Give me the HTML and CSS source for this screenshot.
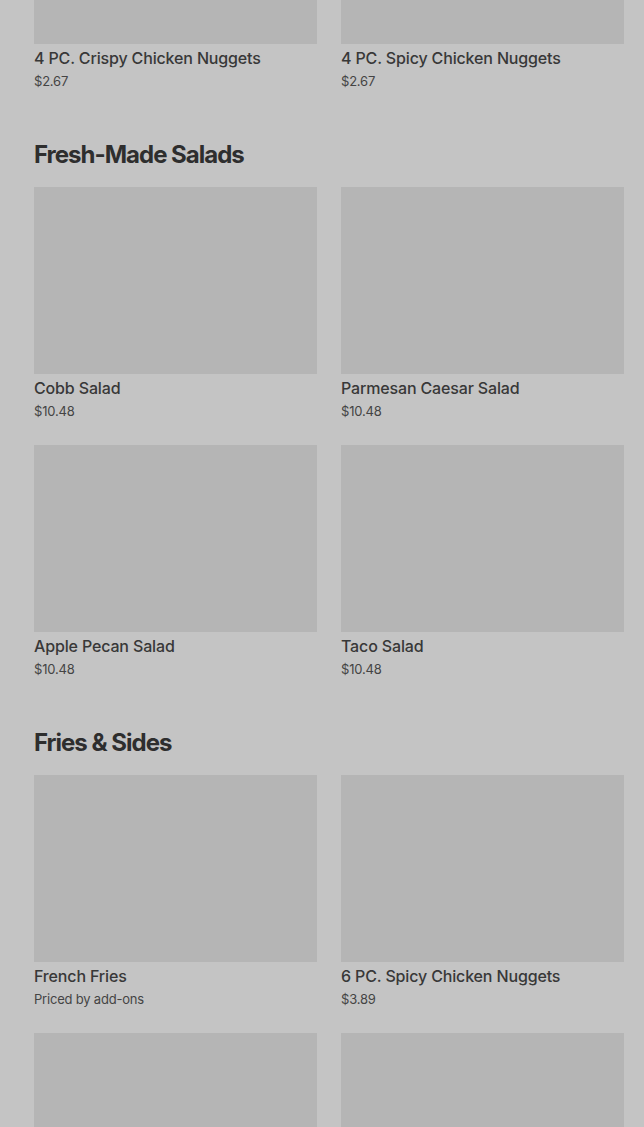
FILE: index.html
```html
<!DOCTYPE html>
<html lang="en">
<head>
<meta charset="utf-8">
<title>Menu</title>
<link rel="stylesheet" href="styles.css">
</head>
<body>
<main class="menu">
  <section class="section first">
    <div class="grid">
      <div class="card"><div class="thumb"></div><div class="name">4 PC. Crispy Chicken Nuggets</div><div class="price">$2.67</div></div>
      <div class="card"><div class="thumb"></div><div class="name">4 PC. Spicy Chicken Nuggets</div><div class="price">$2.67</div></div>
    </div>
  </section>
  <section class="section">
    <h2 class="heading">Fresh-Made Salads</h2>
    <div class="grid">
      <div class="card"><div class="thumb"></div><div class="name">Cobb Salad</div><div class="price">$10.48</div></div>
      <div class="card"><div class="thumb"></div><div class="name">Parmesan Caesar Salad</div><div class="price">$10.48</div></div>
      <div class="card"><div class="thumb"></div><div class="name">Apple Pecan Salad</div><div class="price">$10.48</div></div>
      <div class="card"><div class="thumb"></div><div class="name">Taco Salad</div><div class="price">$10.48</div></div>
    </div>
  </section>
  <section class="section">
    <h2 class="heading">Fries &amp; Sides</h2>
    <div class="grid">
      <div class="card"><div class="thumb"></div><div class="name">French Fries</div><div class="price">Priced by add-ons</div></div>
      <div class="card"><div class="thumb"></div><div class="name">6 PC. Spicy Chicken Nuggets</div><div class="price">$3.89</div></div>
      <div class="card"><div class="thumb"></div></div>
      <div class="card"><div class="thumb"></div></div>
    </div>
  </section>
</main>
</body>
</html>
```

FILE: styles.css
```css
html, body {
  margin: 0;
  padding: 0;
  background: #c4c4c4;
  overflow: hidden;
  height: 1127px;
}

.menu {
  padding: 0 20px 0 34px;
  margin-top: -143px;
  font-family: "Inter", "Liberation Sans", sans-serif;
}

.section {
  padding-top: 48px;
}

.section.first {
  padding-top: 0;
}

.heading {
  margin: 0 0 16px 0;
  font-size: 24px;
  line-height: 32px;
  font-weight: 700;
  letter-spacing: -1px;
  color: #2e2e2e;
}

.grid {
  display: grid;
  grid-template-columns: 283px 283px;
  column-gap: 24px;
  row-gap: 24px;
}

.thumb {
  height: 187px;
  background: #b5b5b5;
}

.name {
  margin-top: 4px;
  font-size: 16px;
  line-height: 20px;
  font-weight: 500;
  letter-spacing: -0.15px;
  color: #383838;
}

.price {
  margin-top: 3px;
  font-size: 13px;
  line-height: 20px;
  font-weight: 400;
  letter-spacing: -0.2px;
  color: #444444;
}
```
